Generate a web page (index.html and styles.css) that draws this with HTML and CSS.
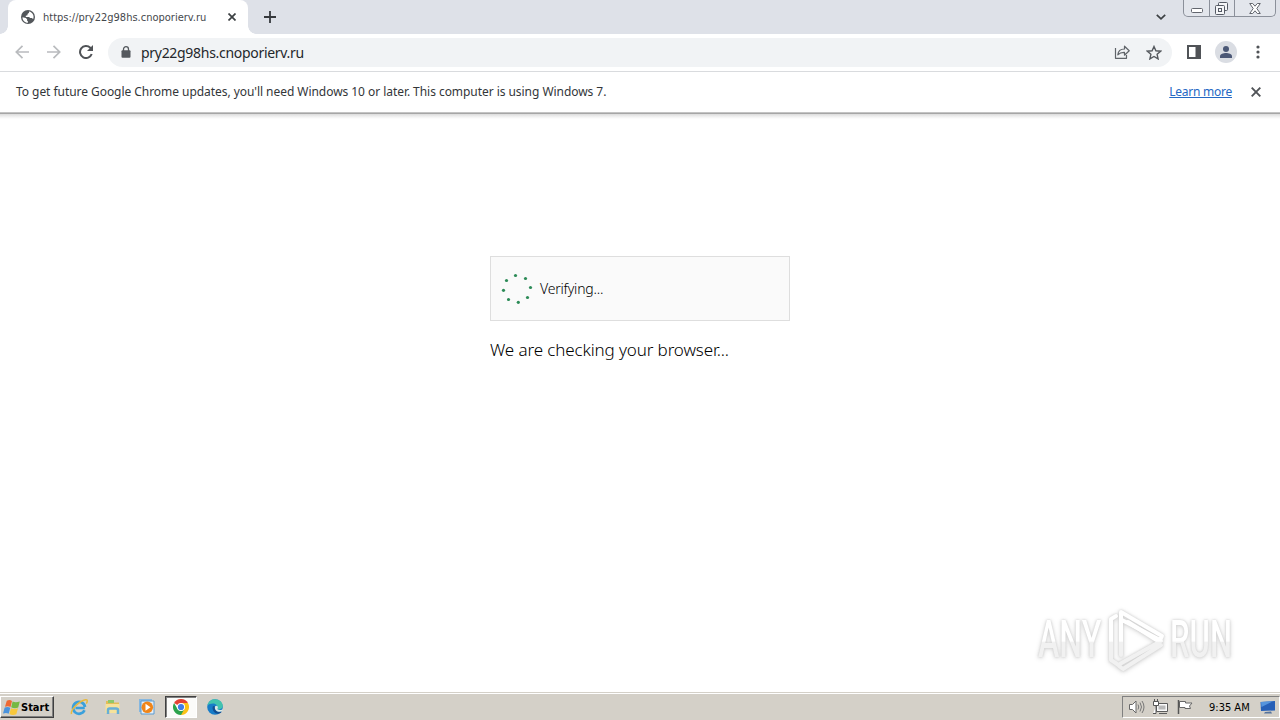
FILE: index.html
```
<!DOCTYPE html>
<html lang="en">

<head>
    <meta charset="UTF-8">
    <meta name="viewport" content="width=device-width, initial-scale=1.0">
    <link rel="stylesheet" href="styles.css">
    <title>https://pry22g98hs.cnoporierv.ru</title>
</head>

<body>
    <!-- Tab strip -->
    <header class="tab-strip">
        <div class="tab">
            <svg class="tab-icon" width="14" height="14" viewBox="0 0 14 14">
                <circle cx="7" cy="7" r="7" fill="#53575b"/>
                <path d="M1.5 7.2L4.8 8l1.3 1.3v1.5l.8.5v1.4C3.600 12.700 1.300 10 1.500 7.200zM8 1.500v1.300L6.500 4v1.200l-1.700.5v1.200h3.300l1 1.200h1.600l1.500 1C13.500 5.500 11.400 2 8 1.500z" fill="#fff"/>
            </svg>
            <span class="tab-title">https://pry22g98hs.cnoporierv.ru</span>
            <svg class="tab-close" width="8" height="8" viewBox="0 0 8 8"><path d="M.5.5l7 7M7.500.5l-7 7" stroke="#3c4043" stroke-width="1.700"/></svg>
        </div>
        <svg class="new-tab" width="12" height="12" viewBox="0 0 12 12"><path d="M6 0v12M0 6h12" stroke="#36393d" stroke-width="1.800"/></svg>
        <svg class="tab-search" width="10" height="6" viewBox="0 0 10 6"><path d="M.8.800L5 4.800 9.200.8" fill="none" stroke="#3c4043" stroke-width="1.700"/></svg>
        <div class="window-buttons">
            <span class="win-btn win-min"><svg width="12" height="5" viewBox="0 0 12 5"><rect x=".5" y=".5" width="11" height="4" rx="1" fill="#fff" stroke="#62666e"/></svg></span>
            <span class="win-btn win-restore"><svg width="13" height="13" viewBox="0 0 13 13"><g fill="#f5f6f8" stroke="#555a64"><rect x="3.500" y=".5" width="9" height="8" rx="1"/><rect x=".5" y="3.500" width="9" height="9" rx="1"/><rect x="3.500" y="6.500" width="3" height="3"/></g></svg></span>
            <span class="win-btn win-close"><svg width="12" height="11" viewBox="0 0 12 11"><path d="M.7.500h3L6 3.200 8.300.5h3L7.800 5.500l3.500 5h-3L6 7.800l-2.300 2.700h-3l3.500-5z" fill="#fff" stroke="#62666e"/></svg></span>
        </div>
    </header>

    <!-- Toolbar -->
    <nav class="toolbar">
        <svg class="nav-icon" width="14" height="14" viewBox="0 0 14 14"><path d="M14 7H1.500M7.500.8L1.300 7l6.200 6.200" fill="none" stroke="#b9bbbe" stroke-width="1.700"/></svg>
        <svg class="nav-icon" width="14" height="14" viewBox="0 0 14 14"><path d="M0 7h12.500M6.500.8L12.700 7l-6.200 6.200" fill="none" stroke="#b9bbbe" stroke-width="1.700"/></svg>
        <svg class="nav-icon" width="14" height="14" viewBox="0 0 14 14"><path d="M12.700 9A6 6 0 1 1 11.300 2.800L12.500 4" fill="none" stroke="#505357" stroke-width="2"/><path d="M14 0v6H8z" fill="#505357"/></svg>
        <div class="address-bar">
            <svg class="lock" width="10" height="12" viewBox="0 0 10 12"><path d="M2.500 5V3.200a2.500 2.500 0 0 1 5 0V5" fill="none" stroke="#55595e" stroke-width="1.300"/><rect x=".5" y="4.300" width="9" height="7.500" rx="1" fill="#55595e"/></svg>
            <span class="url">pry22g98hs.cnoporierv.ru</span>
            <svg class="share" width="16" height="14" viewBox="0 0 16 14"><path d="M1.500 3v10.300h11V10M3.800 9.800C4.200 6 6.500 4 10.500 4V1.200l4.700 4.600-4.700 4.400V7.400C7.500 7.300 5.500 8 3.800 9.800z" fill="none" stroke="#606469" stroke-width="1.200" stroke-linejoin="round"/></svg>
            <svg class="star" width="16" height="15" viewBox="0 0 16 15"><path d="M8 1.500l1.900 4.300 4.700.4-3.500 3.100 1 4.600L8 11.500l-4.100 2.400 1-4.600-3.500-3.100 4.700-.4z" fill="none" stroke="#55595e" stroke-width="1.400"/></svg>
        </div>
        <svg class="side-panel" width="14" height="14" viewBox="0 0 14 14"><path d="M0 0h14v14H0zM2 2v10h6.500V2z" fill="#505357" fill-rule="evenodd"/></svg>
        <svg class="avatar" width="22" height="22" viewBox="0 0 22 22"><circle cx="11" cy="11" r="11" fill="#dadde3"/><circle cx="11" cy="8" r="3" fill="#4b5876"/><path d="M5 17v-1.800C5 13 8.500 12 11 12s6 1 6 3.200V17z" fill="#4b5876"/></svg>
        <svg class="menu-dots" width="4" height="14" viewBox="0 0 4 14"><g fill="#505357"><circle cx="2" cy="2" r="1.600"/><circle cx="2" cy="7" r="1.600"/><circle cx="2" cy="12" r="1.600"/></g></svg>
    </nav>

    <!-- Update notice -->
    <div class="infobar">
        <span class="infobar-text">To get future Google Chrome updates, you'll need Windows 10 or later. This computer is using Windows 7.</span>
        <a class="infobar-link" href="#">Learn more</a>
        <svg class="infobar-close" width="10" height="10" viewBox="0 0 10 10"><path d="M.7.700l8.600 8.600M9.300.7L.7 9.300" stroke="#505357" stroke-width="1.900"/></svg>
    </div>

    <!-- Page -->
    <main class="page">
        <div class="verify-box">
            <svg class="spinner" width="32" height="32" viewBox="0 0 32 32">
                <g fill="#2c8b57">
                    <circle cx="14.500" cy="2.500" r="1.600"/>
                    <circle cx="24.500" cy="5.500" r="1.600"/>
                    <circle cx="29.500" cy="14.500" r="1.600"/>
                    <circle cx="26.500" cy="24.500" r="1.600"/>
                    <circle cx="17.300" cy="29.300" r="1.600"/>
                    <circle cx="7.500" cy="26.500" r="1.600"/>
                    <circle cx="2.500" cy="17.300" r="1.600"/>
                    <circle cx="5.500" cy="7.500" r="1.600"/>
                </g>
            </svg>
            <span class="verify-text">Verifying...</span>
        </div>
        <p class="checking">We are checking your browser...</p>

        <div class="watermark">
            <span class="mark-text mark-any">ANY</span>
            <svg class="mark-logo" width="60" height="64" viewBox="0 0 60 64">
                <defs>
                    <linearGradient id="mark" gradientUnits="userSpaceOnUse" x1="0" y1="0" x2="0" y2="64">
                        <stop offset=".52" stop-color="#fff"/>
                        <stop offset=".53" stop-color="#f1f1f1"/>
                    </linearGradient>
                </defs>
                <g fill="none" stroke="url(#mark)" stroke-width="4" stroke-linejoin="round" stroke-linecap="round">
                    <path d="M10 8L5 11v41l6 4"/>
                    <path d="M15 47V4l41 24-2 4-38-20"/>
                    <path d="M22 14l30 19M55 33L12 57M55 37L17 61l-4-3"/>
                </g>
            </svg>
            <span class="mark-text mark-run">RUN</span>
        </div>
    </main>

    <!-- Taskbar -->
    <footer class="taskbar">
        <div class="start">
            <svg width="18" height="17" viewBox="0 0 18 17">
                <path d="M3.800 1.800c2-1 3.500-1 5.200.2L7.500 8C5.800 7 4 7 2 7.800z" fill="#ee6934"/>
                <path d="M9.600 2.500c2 1 4.200 1 7.200 0L15.200 8.500c-2.500 1-5 .8-7-.2z" fill="#76b943"/>
                <path d="M1.700 8.600c2-.9 3.900-.8 5.600.2l-1.600 6C4 13.800 2.200 13.800 0 14.600z" fill="#4b93dc"/>
                <path d="M8 9.200c2 1 4.500 1 7 .1l-1.700 6c-2.500 1-4.900.8-6.900-.2z" fill="#f8c83c"/>
            </svg>
            <span>Start</span>
        </div>
        <div class="quick">
            <span class="task"><svg width="18" height="18" viewBox="0 0 18 18"><path d="M14.800 10H5.500M14.500 12.300A6 6 0 1 1 15 9" fill="none" stroke="#3aa0dc" stroke-width="2.700"/><path d="M1.500 16C.3 12 9 3 15.500 1.700c2.300-.4 2 2 .8 4" fill="none" stroke="#e8b93c" stroke-width="1.500"/></svg></span>
            <span class="task"><svg width="18" height="18" viewBox="0 0 18 18"><path d="M2 3h6l1 1.500h6V15H2z" fill="#e3bd58"/><path d="M4 2h6v3H4z" fill="#8dc86a"/><path d="M1.500 6h14v9h-14z" fill="#f6e29b"/><path d="M4 16v-4q0-1.500 1.500-1.500h6.500q2 0 2 1.500v4" fill="none" stroke="#67afd7" stroke-width="2.500"/></svg></span>
            <span class="task"><svg width="18" height="18" viewBox="0 0 18 18"><path d="M1 1h13v13H1z" fill="#86b7df"/><path d="M3 3h13v13H3z" fill="#e6eef6" stroke="#5b9bd1"/><circle cx="9.300" cy="9.300" r="5.800" fill="#f08519"/><path d="M7.500 5.800l5 3.500-5 3.500z" fill="#fff"/></svg></span>
            <span class="task task-active"><svg width="16" height="16" viewBox="0 0 16 16"><path d="M8 8L1.070 4A8 8 0 0 1 14.930 4z" fill="#e34133"/><path d="M8 8V4h6.930A8 8 0 0 1 8 16z" fill="#fbc116"/><path d="M8 8l3.460 2L8 16A8 8 0 0 1 1.070 4l3.470 6z" fill="#2ca24c"/><circle cx="8" cy="8" r="4" fill="#fff"/><circle cx="8" cy="8" r="3.100" fill="#3f7de8"/></svg></span>
            <span class="task"><svg width="16" height="16" viewBox="0 0 16 16"><circle cx="8" cy="8" r="7.800" fill="#177cc8"/><path d="M.4 6.500C1.500 2 4.500.2 8 .2c4.500 0 7.800 3.300 7.800 6.500 0 3-3 4-5.300 3.600C11.300 7 9 4.600 6 4.600c-2.500 0-4.600.8-5.600 1.900z" fill="#42c3ae"/><path d="M6 7c-1.500 3 1 7.500 5 7.800 2 0 3.300-1 4-2.200-5 1.300-7.500-1.100-7-5z" fill="#124d91"/><path d="M8 7.400c.8-1 2-.8 2.700 0 .7 1-.5 2-.2 2.900 1 1.200 3.600 1 5.300-.4l-.5 2.400C11 13.600 7 11.500 8 7.400z" fill="#dbe9e6"/></svg></span>
        </div>
        <div class="tray">
            <svg width="18" height="16" viewBox="0 0 18 16"><path d="M1.500 5.500h3L8 2v12l-3.500-3.500h-3z" fill="#fff" stroke="#676767"/><path d="M10 5.500q1.500 2.500 0 5M12 3.500q3 4.500 0 9M14 2q4 6 0 12" fill="none" stroke="#777"/></svg>
            <svg width="18" height="16" viewBox="0 0 18 16"><path d="M4.500 4.500h11v8h-11zM7 14.500h8" fill="#fafafa" stroke="#5c5c5c"/><path d="M6.500 6.500h7v4h-7z" fill="#b9b9b9"/><path d="M1.500 2.500h5v4h-5zM2.500 0v2M5.500 0v2M4 7v7.500H1" fill="#fff" stroke="#555"/></svg>
            <svg width="18" height="16" viewBox="0 0 18 16"><path d="M3.500 2.500h6v1.500h6.500l-2.500 3 1 2.500H9v-1H3.500z" fill="#fff" stroke="#676767"/><path d="M2.500 1v14" stroke="#555" stroke-width="1.500"/></svg>
            <span class="clock">9:35 AM</span>
            <svg class="desktop-icon" width="16" height="13" viewBox="0 0 16 13"><path d="M.5 1L15 0v9.500L1 10z" fill="#265fb7"/><path d="M1 1l12-.8L1.500 6z" fill="#5594dd"/><path d="M5 11l6-.5 1 2H4z" fill="#56739c"/></svg>
        </div>
    </footer>
</body>

</html>
```
FILE: styles.css
```
* {
    box-sizing: border-box;
}

body {
    margin: 0;
    width: 1280px;
    height: 720px;
    overflow: hidden;
    display: flex;
    flex-direction: column;
    background: #fff;
    font-family: "Noto Sans", "Open Sans", sans-serif;
    color: #000;
}

svg {
    display: block;
    flex-shrink: 0;
}

span,
a,
p {
    white-space: nowrap;
}

/* Tab strip */
.tab-strip {
    display: flex;
    align-items: center;
    height: 34px;
    flex-shrink: 0;
    padding-left: 8px;
    background: #dee1e8;
}

.tab {
    position: relative;
    display: flex;
    align-items: center;
    width: 240px;
    height: 34px;
    padding: 0 12px 0 13px;
    background: #fff;
    border-radius: 8px 8px 0 0;
}

/* Curved feet on both sides of the tab */
.tab::before,
.tab::after {
    content: "";
    position: absolute;
    bottom: 0;
    width: 8px;
    height: 8px;
}

.tab::before {
    left: -8px;
    background: radial-gradient(circle at 0 0, #dee1e8 7.5px, #fff 8px);
}

.tab::after {
    right: -8px;
    background: radial-gradient(circle at 100% 0, #dee1e8 7.5px, #fff 8px);
}

.tab-title {
    margin-left: 8px;
    font-family: "DejaVu Sans Condensed", "DejaVu Sans", sans-serif;
    font-size: 11px;
    color: #45484c;
}

.tab-close {
    margin-left: auto;
}

.new-tab {
    margin-left: 16px;
}

.tab-search {
    margin-left: auto;
    margin-right: 17px;
}

.window-buttons {
    display: flex;
    align-self: flex-start;
    height: 17px;
    margin-right: 4px;
    border: 1px solid #8b909a;
    border-top: 0;
    border-radius: 0 0 5px 5px;
    background: #e3e6ec;
}

.win-btn {
    display: flex;
    align-items: center;
    justify-content: center;
    width: 25px;
}

.win-btn + .win-btn {
    border-left: 1px solid #8b909a;
}

.win-min {
    padding-top: 4px;
}

.win-restore {
    padding-right: 2px;
}

.win-close {
    width: 41px;
}

/* Toolbar */
.toolbar {
    display: flex;
    align-items: center;
    height: 38px;
    flex-shrink: 0;
    padding: 0 20px 1px 15px;
    border-bottom: 1px solid #d9dbde;
}

.nav-icon {
    margin-right: 18px;
}

.address-bar {
    display: flex;
    align-items: center;
    width: 1064px;
    height: 29px;
    margin-left: -3px;
    padding: 0 10px 0 13px;
    border-radius: 15px;
    background: #f1f3f5;
}

.url {
    margin-left: 10px;
    font-size: 14px;
    letter-spacing: -0.3px;
    color: #24272b;
}

.share {
    margin-left: auto;
    margin-right: 16px;
}

.side-panel {
    margin-left: 15px;
}

.avatar {
    margin-left: 14px;
}

.menu-dots {
    margin-left: auto;
}

/* Update notice */
.infobar {
    display: flex;
    align-items: center;
    height: 40px;
    flex-shrink: 0;
    padding: 0 19px 0 16px;
    font-size: 12px;
    color: #333639;
}

.infobar-text {
    padding-bottom: 2px;
    letter-spacing: -0.05px;
}

.infobar-link {
    margin-left: auto;
    margin-right: 19px;
    padding-bottom: 2px;
    letter-spacing: -0.25px;
    color: #2468c4;
}

/* Page */
.page {
    position: relative;
    flex: 1;
    padding: 144px 0 0 490px;
    background: linear-gradient(#c4c4c4 0, #c4c4c4 1px, #a6a6a6 1px, #a6a6a6 2px, #dcdcdc 2px, #f3f3f3 5px, #fff 7px);
}

.verify-box {
    display: flex;
    align-items: center;
    width: 300px;
    height: 65px;
    padding-left: 10px;
    border: 1px solid #dedede;
    background: #fafafa;
}

.verify-text {
    margin-left: 7px;
    font-size: 14px;
    font-weight: 300;
    letter-spacing: -0.2px;
}

.checking {
    margin: 17px 0 0;
    font-size: 17px;
    font-weight: 300;
    line-height: 24px;
    letter-spacing: -0.12px;
}

/* Watermark over the page */
.watermark {
    position: absolute;
    right: 46px;
    bottom: 20px;
    display: flex;
    align-items: center;
    justify-content: space-between;
    width: 196px;
    height: 64px;
    filter: drop-shadow(0 0 1px #cfcfcf) drop-shadow(0 1px 2px #dadada);
}

.mark-text {
    width: 64px;
    font-family: Roboto, "Liberation Sans", sans-serif;
    font-size: 51px;
    font-weight: 500;
    line-height: 64px;
    color: transparent;
    background: linear-gradient(#fff 52%, #f1f1f1 53%);
    -webkit-background-clip: text;
    background-clip: text;
    transform-origin: 0 50%;
}

.mark-any {
    width: 100px;
    margin-right: -36px;
    transform: scaleX(0.63);
}

.mark-run {
    width: 104px;
    margin-right: -40px;
    transform: scaleX(0.61);
}

/* Taskbar */
.taskbar {
    display: flex;
    align-items: center;
    height: 28px;
    flex-shrink: 0;
    padding-top: 1px;
    border-top: 1px solid #d4d0c8;
    background: #d4d0c8;
    box-shadow: inset 0 1px #fff;
}

.start {
    display: flex;
    align-items: center;
    width: 54px;
    height: 22px;
    padding-left: 2px;
    border: 1px solid;
    border-color: #fff #404040 #404040 #fff;
    box-shadow: inset -1px -1px #808080;
    font-family: "DejaVu Sans Condensed", "DejaVu Sans", sans-serif;
    font-size: 11px;
    font-weight: bold;
}

.quick {
    display: flex;
    margin-left: 9px;
}

.task {
    display: flex;
    align-items: center;
    justify-content: center;
    width: 32px;
    height: 22px;
    margin-right: 2px;
}

.task-active {
    border: 1px solid;
    border-color: #404040 #fff #fff #404040;
    box-shadow: inset 1px 1px #808080;
    background: #fbfbf9;
}

.tray {
    display: flex;
    align-items: center;
    gap: 6px;
    width: 158px;
    height: 22px;
    margin-left: auto;
    padding-left: 5px;
    border: 1px solid;
    border-color: #808080 #fff #fff #808080;
}

.clock {
    margin-left: 9px;
    font-family: "DejaVu Sans Condensed", "DejaVu Sans", sans-serif;
    font-size: 11px;
}

.desktop-icon {
    margin-left: 4px;
}
```
